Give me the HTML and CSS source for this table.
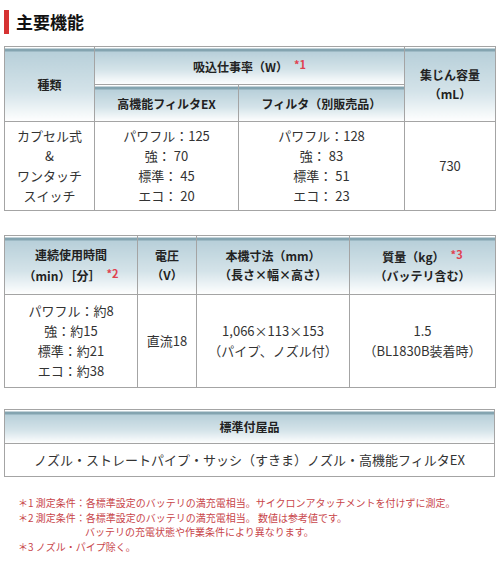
FILE: index.html
```html
<!DOCTYPE html>
<html lang="ja">
<head>
<meta charset="utf-8">
<link rel="stylesheet" href="styles.css">
</head>
<body>
<div class="page">
  <h2 class="title">主要機能</h2>

  <table class="spec t1">
    <colgroup>
      <col class="c1-1"><col class="c1-2"><col class="c1-3"><col class="c1-4">
    </colgroup>
    <tr class="h1">
      <th rowspan="2">種類</th>
      <th colspan="2">吸込仕事率（W）<span class="ast">*1</span></th>
      <th rowspan="2">集じん容量<br>（mL）</th>
    </tr>
    <tr class="h2">
      <th>高機能フィルタEX</th>
      <th>フィルタ（別販売品）</th>
    </tr>
    <tr class="b1">
      <td>カプセル式<br>&amp;<br>ワンタッチ<br>スイッチ</td>
      <td>パワフル：125<br>強： 70<br>標準： 45<br>エコ： 20</td>
      <td>パワフル：128<br>強： 83<br>標準： 51<br>エコ： 23</td>
      <td>730</td>
    </tr>
  </table>

  <table class="spec t2">
    <colgroup>
      <col class="c2-1"><col class="c2-2"><col class="c2-3"><col class="c2-4">
    </colgroup>
    <tr class="h3">
      <th>連続使用時間<br>（min）［分］<span class="ast">*2</span></th>
      <th>電圧<br>（V）</th>
      <th>本機寸法（mm）<br>（長さ×幅×高さ）</th>
      <th>質量（kg）<span class="ast">*3</span><br>（バッテリ含む）</th>
    </tr>
    <tr class="b2">
      <td>パワフル：約8<br>強：約15<br>標準：約21<br>エコ：約38</td>
      <td>直流18</td>
      <td>1,066×113×153<br>（パイプ、ノズル付）</td>
      <td>1.5<br>（BL1830B装着時）</td>
    </tr>
  </table>

  <table class="spec t3">
    <tr class="h4"><th>標準付屋品</th></tr>
    <tr class="b3"><td>ノズル・ストレートパイプ・サッシ（すきま）ノズル・高機能フィルタEX</td></tr>
  </table>

  <div class="notes">
    <p>＊1 測定条件：各標準設定のバッテリの満充電相当。サイクロンアタッチメントを付けずに測定。</p>
    <p>＊2 測定条件：各標準設定のバッテリの満充電相当。 数値は参考値です。</p>
    <p class="indent">バッテリの充電状態や作業条件により異なります。</p>
    <p>＊3 ノズル・パイプ除く。</p>
  </div>
</div>
</body>
</html>
```

FILE: styles.css
```css
html, body {
  margin: 0;
  padding: 0;
  background: #fff;
}
body {
  font-family: "Noto Sans CJK JP", "Noto Sans", sans-serif;
  color: #333;
}
.page {
  padding: 10px 4px 0 4px;
}
.title {
  margin: 0;
  height: 24px;
  line-height: 24px;
  border-left: 5px solid #d63232;
  padding-left: 7px;
  font-size: 17px;
  font-weight: bold;
  color: #111;
}
.spec {
  width: 491px;
  border-collapse: collapse;
  table-layout: fixed;
  font-size: 13px;
}
.t1 { margin-top: 12px; }
.t2 { margin-top: 24px; }
.t3 { margin-top: 21px; }
.spec th, .spec td {
  border: 1px solid #a4a4a4;
  text-align: center;
  vertical-align: middle;
  padding: 0;
}
.spec th {
  font-size: 12px;
  font-weight: bold;
  color: #222;
  line-height: 19px;
  background: linear-gradient(to bottom, #fff 0, #fff 1px, #84a4b0 1px, #84a4b0 4px, #b7cfd9 4px, #d4e3e9 60%, #fff 100%);
}
.spec td {
  line-height: 20px;
  color: #333;
}
.ast {
  color: #e0414f;
  font-size: 11px;
  margin-left: 6px;
  vertical-align: 3px;
}
.c1-1 { width: 90px; }
.c1-2 { width: 144px; }
.c1-3 { width: 166px; }
.c1-4 { width: 91px; }
.c2-1 { width: 133px; }
.c2-2 { width: 59px; }
.c2-3 { width: 153px; }
.c2-4 { width: 146px; }
.h1 { height: 38px; }
.h2 { height: 37px; }
.b1 { height: 89px; }
.h3 { height: 59px; }
.b2 { height: 93px; }
.h4 { height: 34px; }
.b3 { height: 33px; }
.notes {
  margin-top: 19px;
  padding-left: 14px;
  font-size: 10px;
  line-height: 14.5px;
  color: #c8454a;
}
.notes p {
  margin: 0;
}
.notes .indent {
  padding-left: 67px;
}
```
